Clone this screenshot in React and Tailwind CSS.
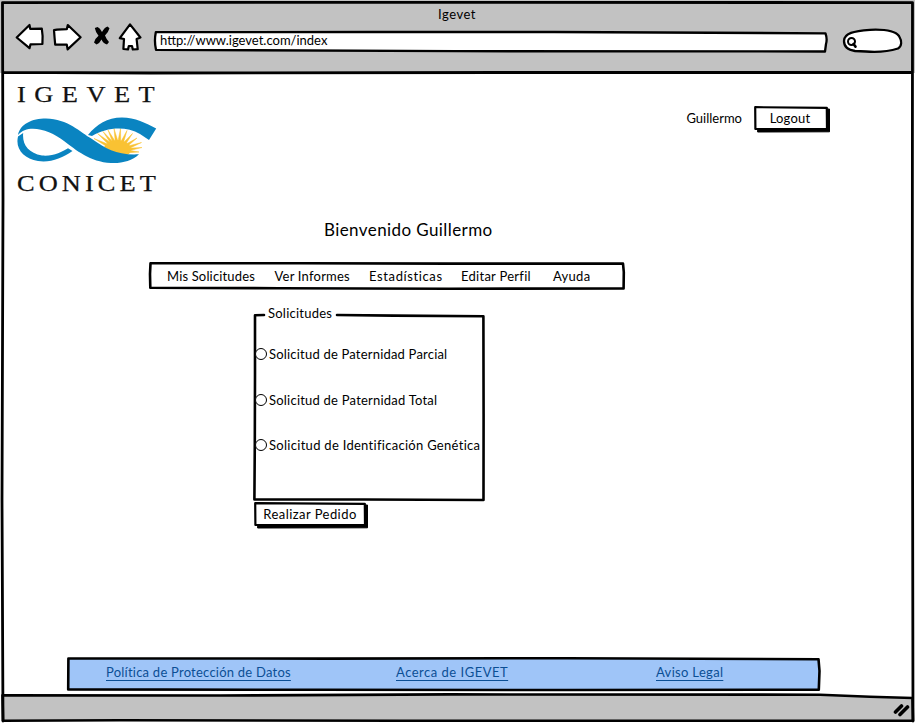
import React from "react";

// Hand-drawn outline stretched behind a box; the box itself is sized by the page flow.
function Outline({ w, h, d, fill = "none", stroke = 2.6 }) {
  return (
    <svg className="pointer-events-none absolute inset-0 overflow-visible" width={w} height={h} viewBox={`0 0 ${w} ${h}`} aria-hidden="true">
      <path d={d} fill={fill} stroke="#000" strokeWidth={stroke} strokeLinejoin="round" strokeLinecap="round" />
    </svg>
  );
}

function NavIcons() {
  return (
    <svg width="128" height="30" viewBox="15 23 128 30" className="shrink-0" aria-hidden="true">
      <g fill="#fff" stroke="#000" strokeWidth="2.2" strokeLinejoin="round">
        <path d="M16.7 37.5 L29.5 25 L30.2 28.8 L41.8 28.6 L42.6 36 L42.4 44 L30.5 44.4 L29.5 48.2 Z" />
        <path d="M54 30.2 L57 29.6 L66.8 29.2 L67.8 25 L80.6 37.3 L67.6 49.4 L66.8 44.6 L55.2 44.6 L54.6 38 Z" />
        <path d="M130 24.4 L140.4 37.5 L136.6 39 L137.7 49.2 L132.8 49.5 L132 46 L128.8 46 L128 49.4 L123.4 49 L124 39 L119.8 38.2 Z" />
      </g>
      <path d="M94.8 28 L97.600 27 Q100 28 102 32 Q104.500 27.500 107.500 26.600 L109.500 28.200 Q108.500 32 105 35.500 Q106.500 39.500 109 42 L107 44.600 Q103 43.500 101.500 39.500 Q99.500 43.500 96.500 44.600 L94 42.600 Q95 38.500 98.500 35.800 Q95.500 32 94.800 28 Z" fill="#000" />
    </svg>
  );
}

const rayTips = [
  [94, 138.500], [97.500, 133.500], [103, 131.500], [108, 130], [114, 128.500], [120.500, 128.500],
  [127, 130.500], [132.500, 133.500], [137, 138], [141.500, 142.500], [142, 147.500], [139, 152],
];

function Emblem() {
  return (
    <svg width="142" height="50" viewBox="16 116 142 50" className="block" aria-hidden="true">
      <g fill="#f9c233">
        {rayTips.map(([x, y]) => {
          const dx = x - 118.500;
          const dy = y - 151;
          const len = Math.hypot(dx, dy);
          const ox = (-dy / len) * 2.400;
          const oy = (dx / len) * 2.400;
          return <polygon key={x} points={`${x},${y} ${118.500 + ox},${151 + oy} ${118.500 - ox},${151 - oy}`} stroke="#f9c233" strokeWidth="0.5" />;
        })}
        <path d="M104 147 Q108 140.500 118 140 Q128 141 131 148 Q132 152 127 155.500 Q113 155 104 147 Z" />
      </g>
      <g fill="#0a84c1">
        <path d="M18 135 C20 124 32 118.500 46 118.500 C68 119 80 132 92 139 C106 149 118 155.500 139 154.300 C132 161 122 163.500 111 163 C90 162 76 150 64 141 C50 130 28 123 18 135 Z" />
        <path d="M18 136.500 L23.200 133 C22 144 28 153 42 155.500 C53 156.500 62 152 68 148.300 L72.500 151 C62 158.500 50 162.800 38 161 C24 158.500 15 149 18 136.500 Z" />
        <path d="M88 135 C97 124 107 117.500 122 117.500 C135 117.500 146 123 156.200 128.600 L149 140 L140 134 C126 126 107 127 92 136 Z" />
      </g>
    </svg>
  );
}

function SketchButton({ w, h, textClass, children }) {
  return (
    <button className="relative shrink-0 text-center" style={{ width: w, height: h }}>
      <Outline w={w} h={h} fill="#000" stroke={1} d={`M4 4 L${w + 1.500} 3 L${w + 1.500} ${h + 1.800} L4 ${h + 2} Z`} />
      <Outline w={w} h={h} fill="#fff" stroke={2.200} d={`M1.200 1.200 L${w - 1.200} 1.800 L${w - 1} ${h - 1.200} L1.400 ${h - 1} Z`} />
      <span className={"relative block whitespace-nowrap " + textClass}>{children}</span>
    </button>
  );
}

const menu = [
  ["Mis Solicitudes", "w-[107.5px] tracking-[0.16px]"],
  ["Ver Informes", "w-[94.5px] tracking-[0.22px]"],
  ["Estadísticas", "w-[92px] tracking-[0.62px]"],
  ["Editar Perfil", "w-[92px] tracking-[0.27px]"],
  ["Ayuda", "w-[60px] tracking-[0.3px]"],
];

const options = [
  ["Solicitud de Paternidad Parcial", "mb-[26px] tracking-[0.2px]"],
  ["Solicitud de Paternidad Total", "mb-[25px] tracking-[0.22px]"],
  ["Solicitud de Identificación Genética", "tracking-[0.29px]"],
];

export default function App() {
  return (
    <div className="relative flex h-[723px] w-[915px] flex-col overflow-hidden bg-white font-['Lato',sans-serif] text-[13px] leading-5 text-black">
      <header className="h-[73px] shrink-0 bg-[#c2c2c2]">
        <h1 className="h-[23px] pt-[4px] pr-px text-center text-[13px] leading-5 tracking-[0.5px]">Igevet</h1>
        <div className="flex pl-[15px]">
          <NavIcons />
          <div className="relative ml-[11px] mt-[8px] h-[20px] w-[673px] pl-[6px]">
            <Outline w={673} h={20} fill="#fff" stroke={2.300} d="M1.800 1.200 L220 1 L400 1 L671.500 2.300 Q673.500 8 672 13 L671 20.500 L300 20.200 L2 18.800 Q0 10 1.800 1.200 Z" />
            <span className="relative block whitespace-nowrap leading-[19px]">http://www.igevet.com/index</span>
          </div>
          <svg className="ml-[15px] mt-[4px]" width="62" height="28" viewBox="842 27 62 28" aria-hidden="true">
            <path d="M844 41 C844 33 854 31 870 29.800 C888 29 896 32 899 36 C902 41 902 46 898 48.500 C890 51 878 52.400 866 51.500 L855 51 C848 50 844 47 844 41 Z" fill="#fff" stroke="#000" strokeWidth="2.300" />
            <circle cx="851.500" cy="41.500" r="3.500" fill="none" stroke="#000" strokeWidth="2" />
            <path d="M853.500 44 L855.500 46.600" stroke="#000" strokeWidth="2.600" strokeLinecap="round" />
          </svg>
        </div>
      </header>

      <main className="flex h-[622px] shrink-0 flex-col">
        <div className="flex h-[140px] shrink-0 justify-between">
          <div className="ml-[16px] w-[142px] pt-[8px] font-['Liberation_Serif',serif] text-[24px] text-[#111]">
            <div className="ml-px h-[35px] origin-left scale-x-110 whitespace-nowrap leading-[27px] tracking-[7.7px] [-webkit-text-stroke:0.25px_#111]">IGEVET</div>
            <Emblem />
            <div className="ml-px mt-[4px] origin-left scale-x-110 whitespace-nowrap leading-[27px] tracking-[3.7px] [-webkit-text-stroke:0.25px_#111]">CONICET</div>
          </div>
          <div className="mr-[87px] flex pt-[33px]">
            <span className="mr-[12px] mt-[2px]">Guillermo</span>
            <SketchButton w={74} h={24} textClass="leading-[22px] -left-px tracking-[0.2px]">Logout</SketchButton>
          </div>
        </div>

        <h2 className="ml-[324px] h-[49px] shrink-0 pt-[5px] text-[17px] leading-6 tracking-[0.41px]">Bienvenido Guillermo</h2>

        <nav className="relative ml-[149px] flex h-[28px] w-[476px] shrink-0 pl-[18px]">
          <Outline w={476} h={28} d="M1.500 1.200 L150 1.200 L300 1.600 L474 1.600 L474.800 10 L474.600 26.400 L300 26.800 L130 26.200 L1.300 25.800 L1 12 Z" />
          {menu.map(([label, cls]) => (
            <a key={label} className={"leading-[29px] whitespace-nowrap " + cls}>{label}</a>
          ))}
        </nav>

        <section className="relative ml-[254px] mt-[24px] h-[187px] w-[231px] shrink-0">
          <Outline w={231} h={187} d="M10 1 L1 1.200 L1 60 L0.800 130 L0.400 185.500 L110 185.500 L229.500 186 L229.600 100 L229.400 2.200 L140 1.600 L83 1" />
          <h3 className="relative -mt-[11px] mb-[8px] h-[33px] pl-[14px] leading-[20px] tracking-[0.24px]">Solicitudes</h3>
          {options.map(([label, cls]) => (
            <label key={label} className={"relative flex h-5 items-center whitespace-nowrap " + cls}>
              <span className="ml-[1px] mr-[2px] size-[12px] shrink-0 rounded-full border-[1.300px] border-black bg-white" />
              {label}
            </label>
          ))}
        </section>

        <div className="ml-[254px] mt-px h-[26px]">
          <SketchButton w={112} h={24} textClass="leading-[24px] tracking-[0.45px]">Realizar Pedido</SketchButton>
        </div>

        <footer className="relative mb-[4px] ml-[67px] mt-auto flex h-[34px] w-[754px] shrink-0 pl-[39px] text-[#0b4f95]">
          <Outline w={754} h={34} fill="#9fc5f8" d="M1.400 1.500 L260 1.600 L500 1.200 L751.500 2.200 L752.500 14 L751.800 32.600 L500 33 L250 32.800 L1.200 32.400 Z" />
          <div className="relative w-[290px] leading-[31px]"><a className="tracking-[0.23px] underline underline-offset-[3px]">Política de Protección de Datos</a></div>
          <div className="relative w-[260px] leading-[31px]"><a className="tracking-[0.5px] underline underline-offset-[3px]">Acerca de IGEVET</a></div>
          <div className="relative leading-[31px]"><a className="tracking-[0.32px] underline underline-offset-[3px]">Aviso Legal</a></div>
        </footer>
      </main>

      <div className="relative h-[28px] shrink-0">
        <Outline w={915} h={28} fill="#c2c2c2" stroke={2.600} d="M2.500 0.300 L220 0.500 L450 -0.600 L820 -0.300 L870 1.800 L912.500 3 L913 25.700 L400 25.700 L120 25.200 L3 25.700 Z" />
        <svg className="absolute right-[4px] top-[7px]" width="18" height="16" viewBox="893 702 18 16" aria-hidden="true">
          <path d="M895.500 712 L901.500 706 M900 714.500 L907.500 707" stroke="#000" strokeWidth="3.600" strokeLinecap="round" />
        </svg>
      </div>

      <Outline w={915} h={723} stroke={2.800} d="M2.500 2.600 L400 2.300 L912.500 2.600 L912.300 300 L913 721 M2.500 2.600 L3 200 L2 500 L3 721 M3 72.300 L150 73 L500 72.500 L912 72.500" />
    </div>
  );
}
